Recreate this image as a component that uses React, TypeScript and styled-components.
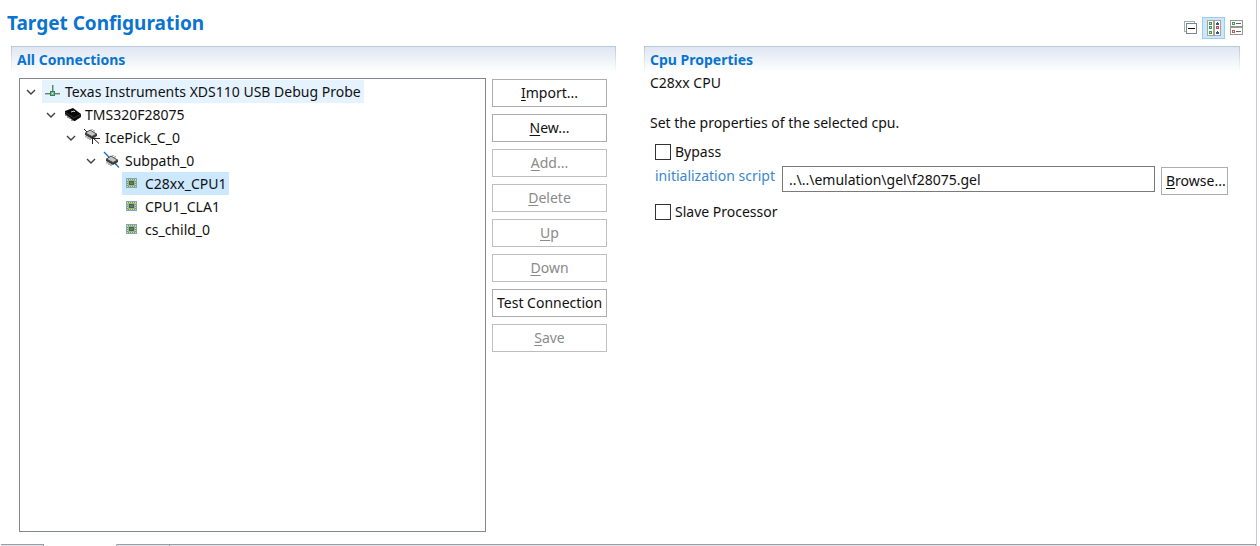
import React, { useState } from 'react';
import styled, { createGlobalStyle, css } from 'styled-components';

const GlobalStyle = createGlobalStyle`
  *, *::before, *::after { box-sizing: border-box; }
  body {
    margin: 0;
    background: #fff;
    color: #111;
    font-family: 'Noto Sans', 'Open Sans', sans-serif;
    font-size: 14px;
    line-height: 20px;
  }
  h1, h2, p, ul { margin: 0; padding: 0; }
  button, input { font: inherit; color: inherit; }
`;

const Page = styled.div`
  min-height: 100vh;
  display: flex;
  flex-direction: column;
  margin-right: 3px;
  border-right: 1px solid #c9cbdc;
`;

const Header = styled.header`
  display: flex;
  justify-content: space-between;
  align-items: center;
  height: 46px;
  padding: 0 8px 0 7px;
`;

const Title = styled.h1`
  color: #0a74cf;
  font-size: 19px;
  line-height: 26px;
  font-weight: 700;
`;

const Toolbar = styled.div`
  display: flex;
  padding-top: 9px;
`;

const ToolButton = styled.button<{ $active?: boolean }>`
  display: flex;
  align-items: center;
  justify-content: center;
  width: 23px;
  height: 22px;
  padding: 0;
  border: 1px solid ${(p) => (p.$active ? '#99cdf5' : 'transparent')};
  background: ${(p) => (p.$active ? '#cce6fb' : 'transparent')};
`;

const Columns = styled.main`
  flex: 1;
  display: grid;
  grid-template-columns: 605fr 596fr;
  gap: 28px;
  padding: 0 16px 12px 11px;
`;

const Section = styled.section`
  display: flex;
  flex-direction: column;
  min-width: 0;
`;

const SectionTitle = styled.h2`
  height: 26px;
  padding: 3px 5px;
  border: solid #b9cbdd;
  border-width: 1px 1px 0;
  border-image: linear-gradient(#b4c8dc, #fff) 1;
  background: linear-gradient(#dfe7f2, #fff);
  color: #0a74cf;
  font-size: 14px;
  line-height: 20px;
  font-weight: 700;
`;

const Connections = styled.div`
  flex: 1;
  display: flex;
  gap: 6px;
  padding: 6px 9px 0 8px;
`;

const Tree = styled.ul`
  flex: 1;
  border: 1px solid #828790;
  padding-top: 1px;
  list-style: none;
`;

const TreeRow = styled.li<{ $level: number }>`
  display: flex;
  height: 23px;
  padding-left: ${(p) => p.$level * 20}px;
`;

const Twisty = styled.span`
  display: flex;
  align-items: center;
  justify-content: center;
  width: 22px;
`;

const NodeLabel = styled.span<{ $tone?: 'hover' | 'selected' }>`
  display: flex;
  align-items: center;
  gap: 4px;
  padding: 0 3px;
  white-space: nowrap;
  ${(p) => p.$tone === 'hover' && css`background: #e5f3ff;`}
  ${(p) => p.$tone === 'selected' && css`background: #cce8ff;`}
`;

const Actions = styled.div`
  display: flex;
  flex-direction: column;
  gap: 7px;
  width: 115px;
  padding-top: 1px;
`;

const PushButton = styled.button`
  height: 28px;
  padding: 0 4px;
  border: 1px solid #adadad;
  background: #fff;
  color: #111;
  white-space: nowrap;
  &:disabled { color: #8a8a8a; border-color: #bfbfbf; }
  u { text-underline-offset: 2px; text-decoration-thickness: 1px; }
`;

const Properties = styled.div`
  display: flex;
  flex-direction: column;
  padding: 1px 12px 0 6px;
`;

const PropertiesHeading = styled.p`
  margin-bottom: 20px;
`;

const Description = styled.p`
  margin-bottom: 9px;
`;

const Form = styled.form`
  display: flex;
  flex-direction: column;
  padding-left: 5px;
`;

const CheckLabel = styled.label`
  display: flex;
  align-items: center;
  gap: 4px;
  height: 20px;
`;

const CheckBox = styled.input`
  appearance: none;
  width: 16px;
  height: 16px;
  margin: 0;
  border: 1px solid #333;
  background: #fff;
  &:checked { background: #333; box-shadow: inset 0 0 0 3px #fff; }
`;

const ScriptRow = styled.div`
  display: flex;
  align-items: flex-start;
  gap: 6px;
  padding: 4px 0 7px;
`;

const ScriptLabel = styled.label`
  flex: none;
  width: 121px;
  color: #3a87cf;
  white-space: nowrap;
`;

const ScriptInput = styled.input`
  flex: 1;
  min-width: 0;
  height: 26px;
  padding: 0 6px;
  border: 1px solid #7a7a7a;
  background: #fff;
`;

const BrowseButton = styled(PushButton)`
  width: 67px;
  margin-top: 1px;
`;

const TabStrip = styled.footer`
  display: flex;
  height: 2px;
  padding-left: 1px;
`;

const TabEdge = styled.div<{ $width?: number; $active?: boolean }>`
  ${(p) => (p.$width ? css`width: ${p.$width}px;` : css`flex: 1;`)}
  border-top: 1px solid ${(p) => (p.$active ? 'transparent' : '#9c9ea3')};
  border-right: 1px solid #9c9ea3;
  background: ${(p) => (p.$active ? '#fff' : '#dfe2e8')};
`;

const Chevron = () => (
  <svg width="10" height="6" viewBox="0 0 10 6" aria-hidden="true">
    <path d="M1 1l4 4 4-4" fill="none" stroke="#404040" strokeWidth="1.4" />
  </svg>
);

const ProbeIcon = () => (
  <svg width="16" height="16" viewBox="0 0 16 16" shapeRendering="crispEdges" aria-hidden="true">
    <path d="M0 9h15v1H0z" fill="#6d7f7a" />
    <path d="M0 10h15v1H0z" fill="#b4bfc0" />
    <path d="M7 1h1v6H7z" fill="#4f9068" />
    <path d="M8 1h1v6H8z" fill="#a9bcb4" />
    <path d="M5 7h5v5H5z" fill="#3a8057" />
    <path d="M6 8h3v3H6z" fill="#7dbb90" />
    <path d="M7 9h1v1H7z" fill="#e4f8e8" />
  </svg>
);

const ChipIcon = () => (
  <svg width="16" height="16" viewBox="0 0 16 16" aria-hidden="true">
    <path d="M0 4l8-3 8 6v3l-6 4H9L0 7z" fill="#080808" />
    <path d="M1 7v2M3 9v2M5 11v1M7 12v2M13 11v1M15 9v1" stroke="#333" />
    <path d="M6 5l3-1 1 1" fill="none" stroke="#ccc" />
    <path d="M0 5l9 6 7-4" fill="none" stroke="#666" strokeWidth=".5" />
  </svg>
);

const ChipBody = () => (
  <>
    <path d="M2 7l5-3 7 4v2l-5 3-7-4z" fill="#3c3c3c" />
    <path d="M2.500 7L7 4l6.500 4L9 10.500z" fill="#c4c4c4" stroke="#3a3a3a" strokeWidth=".8" />
    <path d="M3 10v1.500M5 11v2M7 12v2M12 11.500v1.500M9 3v1M11 4v1.500" stroke="#444" strokeWidth=".8" />
  </>
);

const IcePickIcon = () => (
  <svg width="16" height="16" viewBox="0 0 16 16" overflow="visible" aria-hidden="true">
    <path d="M-1-1l4 4" stroke="#222" />
    <g transform="translate(-2 -4)"><ChipBody /></g>
    <path d="M7 7l7 6.500M8 8.500h7M7.500 8v6" fill="none" stroke="#222" />
  </svg>
);

const SubpathIcon = () => (
  <svg width="16" height="16" viewBox="0 0 16 16" overflow="visible" aria-hidden="true">
    <path d="M-1-1l15 15.500" stroke="#1471cc" strokeWidth="1.300" />
    <g transform="translate(-1 -1)"><ChipBody /></g>
  </svg>
);

const CpuIcon = () => (
  <svg width="16" height="16" viewBox="0 0 16 16" shapeRendering="crispEdges" aria-hidden="true">
    <path d="M1 2h11v10H1z" fill="#7fa5c4" />
    <path d="M2 3h9v8H2z" fill="#6f9678" />
    <path d="M2 3.500h9M2 10.500h9" stroke="#d3dd86" strokeDasharray="1 1" />
    <path d="M2.500 4v7M10.500 4v7" stroke="#d3dd86" strokeDasharray="1 1" />
    <path d="M3 4h7v6H3z" fill="#9dba72" />
    <path d="M4 5h5v4H4z" fill="#46615c" />
    <path d="M5 6h3v2H5z" fill="#5d7c78" />
  </svg>
);

const CollapseIcon = () => (
  <svg width="14" height="14" viewBox="0 0 14 14" shapeRendering="crispEdges" aria-hidden="true">
    <path d="M1.500 10.500h-1v-10h10v2" fill="none" stroke="#a3aeb5" />
    <path d="M2.500 2.500h10v10h-10z" fill="#fff" stroke="#7d8790" />
    <path d="M4 7h7v1H4z" fill="#111" />
  </svg>
);

const VerticalLayoutIcon = () => (
  <svg width="14" height="16" viewBox="0 0 14 16" shapeRendering="crispEdges" aria-hidden="true">
    <path d="M.5.5h6v15h-6zM7.500.5h6v15h-6z" fill="#fff" stroke="#aaa58c" />
    <path d="M2 2h3v3H2zM2 6h3v3H2zM2 11h3v3H2z" fill="#3c9b5c" />
    <path d="M3 3h1v1H3zM3 7h1v1H3zM3 12h1v1H3z" fill="#b9e6c5" />
    <path d="M10 2h1v1h1v2H9V3h1zM10 11h1v1h1v2H9v-2h1z" fill="#3854a4" />
    <path d="M9 6h3v3H9z" fill="#c34a5d" />
    <path d="M10 7h1v1h-1z" fill="#f2c0c6" />
  </svg>
);

const HorizontalLayoutIcon = () => (
  <svg width="13" height="15" viewBox="0 0 13 15" shapeRendering="crispEdges" aria-hidden="true">
    <path d="M.5.5h12v6H.5zM.5 7.500h12v7H.5z" fill="#fff" stroke="#98988c" />
    <path d="M2 2h3v3H2z" fill="#4a9a5e" />
    <path d="M2 10h3v3H2z" fill="#bd5b5b" />
    <path d="M3 3h1v1H3zM3 11h1v1H3z" fill="#e6efe2" />
    <path d="M6 3h5v1H6zM6 11h5v1H6z" fill="#5c667c" />
  </svg>
);

interface TreeNode {
  name: string;
  level: number;
  icon: React.ReactNode;
  leaf?: boolean;
  tone?: 'hover' | 'selected';
}

const nodes: TreeNode[] = [
  { name: 'Texas Instruments XDS110 USB Debug Probe', level: 0, icon: <ProbeIcon />, tone: 'hover' },
  { name: 'TMS320F28075', level: 1, icon: <ChipIcon /> },
  { name: 'IcePick_C_0', level: 2, icon: <IcePickIcon /> },
  { name: 'Subpath_0', level: 3, icon: <SubpathIcon /> },
  { name: 'C28xx_CPU1', level: 4, icon: <CpuIcon />, leaf: true, tone: 'selected' },
  { name: 'CPU1_CLA1', level: 4, icon: <CpuIcon />, leaf: true },
  { name: 'cs_child_0', level: 4, icon: <CpuIcon />, leaf: true },
];

const actions = [
  { key: 'I', rest: 'mport...' },
  { key: 'N', rest: 'ew...' },
  { key: 'A', rest: 'dd...', disabled: true },
  { key: 'D', rest: 'elete', disabled: true },
  { key: 'U', rest: 'p', disabled: true },
  { key: 'D', rest: 'own', disabled: true },
  { key: '', rest: 'Test Connection' },
  { key: 'S', rest: 'ave', disabled: true },
];

export default function App() {
  const [script, setScript] = useState('..\\..\\emulation\\gel\\f28075.gel');

  return (
    <>
      <GlobalStyle />
      <Page>
        <Header>
          <Title>Target Configuration</Title>
          <Toolbar>
            <ToolButton type="button" aria-label="Collapse all"><CollapseIcon /></ToolButton>
            <ToolButton type="button" aria-label="Vertical layout" $active><VerticalLayoutIcon /></ToolButton>
            <ToolButton type="button" aria-label="Horizontal layout"><HorizontalLayoutIcon /></ToolButton>
          </Toolbar>
        </Header>
        <Columns>
          <Section>
            <SectionTitle>All Connections</SectionTitle>
            <Connections>
              <Tree>
                {nodes.map((n) => (
                  <TreeRow key={n.name} $level={n.level}>
                    <Twisty>{!n.leaf && <Chevron />}</Twisty>
                    <NodeLabel $tone={n.tone}>
                      {n.icon}
                      <span>{n.name}</span>
                    </NodeLabel>
                  </TreeRow>
                ))}
              </Tree>
              <Actions>
                {actions.map((a) => (
                  <PushButton key={a.key + a.rest} type="button" disabled={a.disabled}>
                    {a.key && <u>{a.key}</u>}
                    {a.rest}
                  </PushButton>
                ))}
              </Actions>
            </Connections>
          </Section>
          <Section>
            <SectionTitle>Cpu Properties</SectionTitle>
            <Properties>
              <PropertiesHeading>C28xx CPU</PropertiesHeading>
              <Description>Set the properties of the selected cpu.</Description>
              <Form>
                <CheckLabel><CheckBox type="checkbox" />Bypass</CheckLabel>
                <ScriptRow>
                  <ScriptLabel htmlFor="script">initialization script</ScriptLabel>
                  <ScriptInput id="script" value={script} onChange={(e) => setScript(e.target.value)} />
                  <BrowseButton type="button"><u>B</u>rowse...</BrowseButton>
                </ScriptRow>
                <CheckLabel><CheckBox type="checkbox" />Slave Processor</CheckLabel>
              </Form>
            </Properties>
          </Section>
        </Columns>
        <TabStrip>
          <TabEdge $width={43} />
          <TabEdge $width={73} $active />
          <TabEdge $width={53} />
          <TabEdge />
        </TabStrip>
      </Page>
    </>
  );
}
